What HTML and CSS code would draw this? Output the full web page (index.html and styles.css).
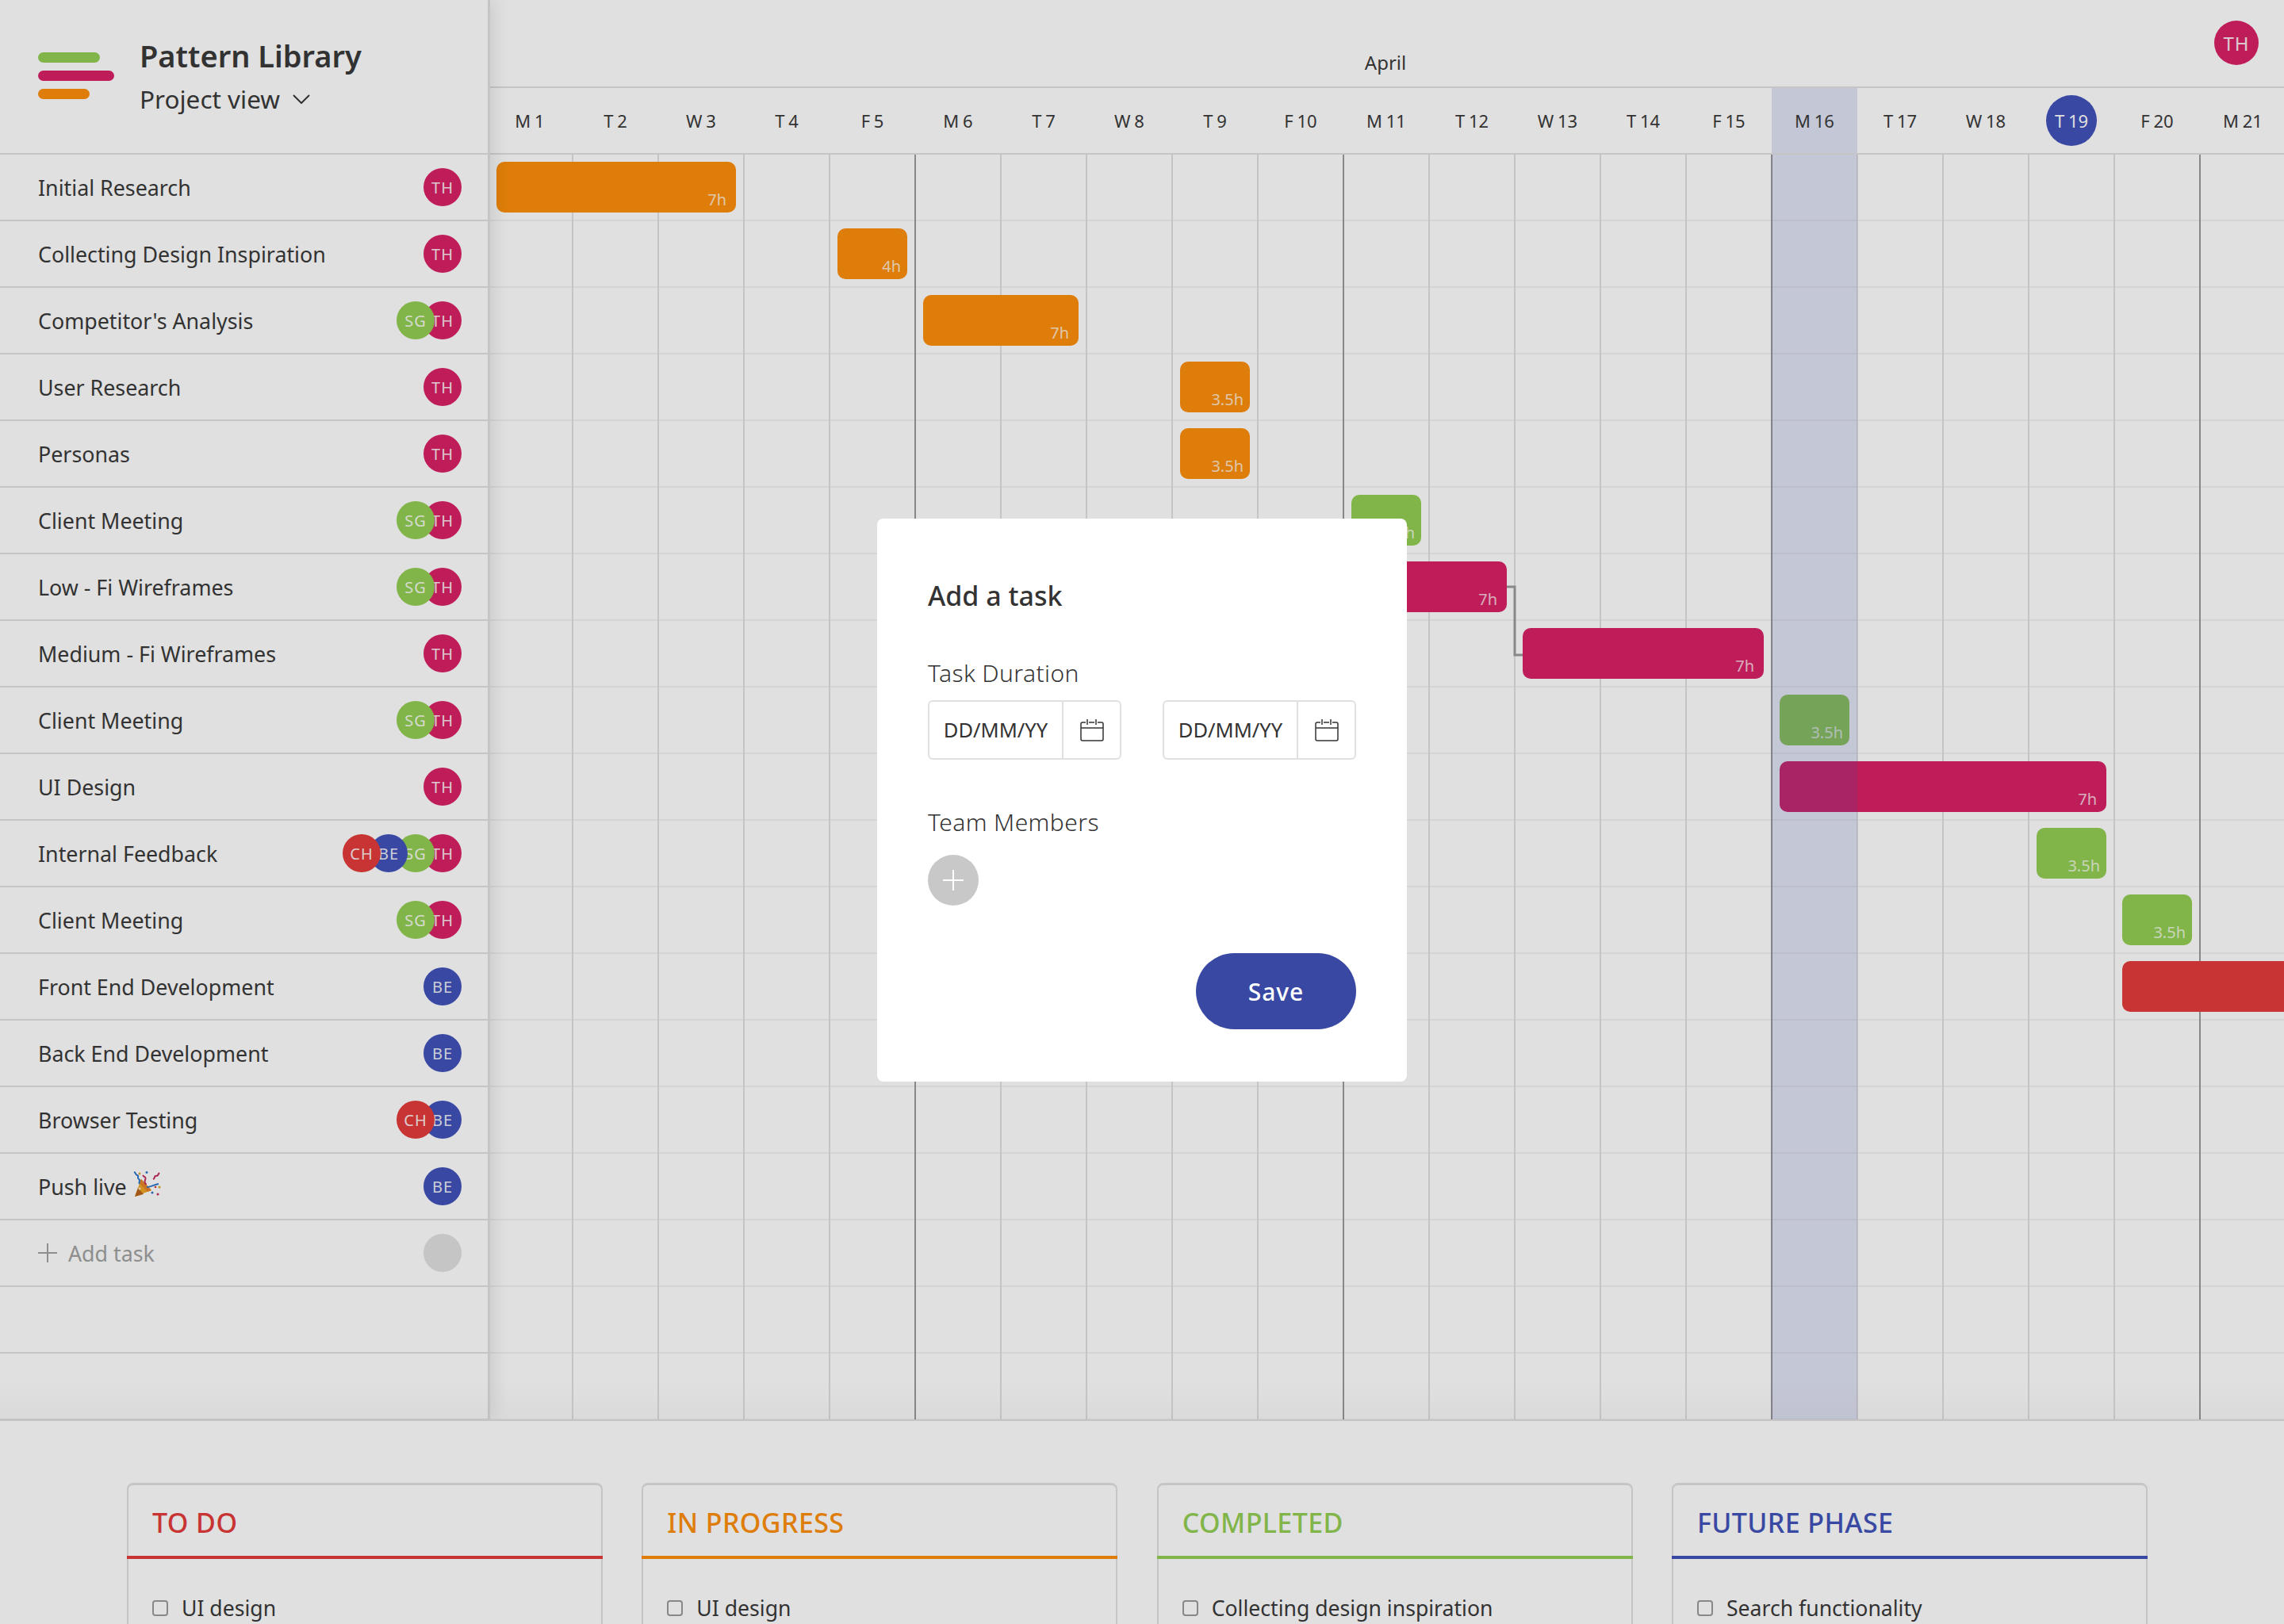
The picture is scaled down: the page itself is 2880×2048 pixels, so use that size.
FILE: index.html
```html
<!DOCTYPE html>
<html lang="en">
<head>
  <meta charset="UTF-8" />
  <title>Pattern Library - Project view</title>
  <link rel="stylesheet" href="styles.css">
</head>
<body>
  <div class="planner">
    <aside class="sidebar">
      <div class="brand">
        <div class="logo"><span class="logo-a"></span><span class="logo-b"></span><span class="logo-c"></span></div>
        <div>
          <h1>Pattern Library</h1>
          <div class="view">Project view
            <svg width="22" height="12" viewBox="0 0 22 12"><path d="M1 1l10 10L21 1" fill="none" stroke="#3a3a3a" stroke-width="2"/></svg>
          </div>
        </div>
      </div>
      <div class="task"><span>Initial Research</span><div class="people"><i class="av th">TH</i></div></div>
      <div class="task"><span>Collecting Design Inspiration</span><div class="people"><i class="av th">TH</i></div></div>
      <div class="task"><span>Competitor's Analysis</span><div class="people"><i class="av th">TH</i><i class="av sg">SG</i></div></div>
      <div class="task"><span>User Research</span><div class="people"><i class="av th">TH</i></div></div>
      <div class="task"><span>Personas</span><div class="people"><i class="av th">TH</i></div></div>
      <div class="task"><span>Client Meeting</span><div class="people"><i class="av th">TH</i><i class="av sg">SG</i></div></div>
      <div class="task"><span>Low - Fi Wireframes</span><div class="people"><i class="av th">TH</i><i class="av sg">SG</i></div></div>
      <div class="task"><span>Medium - Fi Wireframes</span><div class="people"><i class="av th">TH</i></div></div>
      <div class="task"><span>Client Meeting</span><div class="people"><i class="av th">TH</i><i class="av sg">SG</i></div></div>
      <div class="task"><span>UI Design</span><div class="people"><i class="av th">TH</i></div></div>
      <div class="task"><span>Internal Feedback</span><div class="people"><i class="av th">TH</i><i class="av sg">SG</i><i class="av be">BE</i><i class="av ch">CH</i></div></div>
      <div class="task"><span>Client Meeting</span><div class="people"><i class="av th">TH</i><i class="av sg">SG</i></div></div>
      <div class="task"><span>Front End Development</span><div class="people"><i class="av be">BE</i></div></div>
      <div class="task"><span>Back End Development</span><div class="people"><i class="av be">BE</i></div></div>
      <div class="task"><span>Browser Testing</span><div class="people"><i class="av be">BE</i><i class="av ch">CH</i></div></div>
      <div class="task"><span class="push">Push live
        <svg class="popper" width="38" height="33" viewBox="0 0 38 33">
          <path d="M10 10L2 32l21-8z" fill="#f0a526"/>
          <path d="M2 32l4-11 7 8z" fill="#b8651c"/>
          <path d="M10 10l13 14-5 2L8 15z" fill="#e5842a"/>
          <path d="M1 1c3 1 1 3 4 4s-1 3 2 5-1 4 1 6" stroke="#2f76c9" stroke-width="2" fill="none"/>
          <path d="M12 5c2 3 5 2 3 6s1 3 1 6" stroke="#c32f5f" stroke-width="2" fill="none"/>
          <path d="M25 10c3-1 1-3 3-4s2 1 3-1 1-2 2-3" stroke="#c32f5f" stroke-width="2" fill="none"/>
          <path d="M17 20c5 0 9-3 15-4" stroke="#2f76c9" stroke-width="2" fill="none"/>
          <circle cx="8" cy="3" r="1.500" fill="#e0a52c"/>
          <circle cx="17" cy="1.500" r="1.500" fill="#2f76c9"/>
          <circle cx="33" cy="20" r="1.500" fill="#e0a52c"/>
          <circle cx="28" cy="20" r="1.300" fill="#d8392f"/>
          <circle cx="24" cy="27" r="1.500" fill="#2f76c9"/>
          <circle cx="31" cy="29" r="1.500" fill="#c32f5f"/>
          <circle cx="8" cy="22" r="1.500" fill="#fbe6c2"/>
        </svg></span><div class="people"><i class="av be">BE</i></div></div>
      <div class="task add"><span class="add-label">
        <svg width="24" height="24" viewBox="0 0 24 24"><path d="M12 0v24M0 12h24" stroke="#a2a2a2" stroke-width="2"/></svg>
        Add task</span><div class="people"><i class="av empty"></i></div></div>
      <div class="task"></div>
      <div class="task"></div>
    </aside>

    <main class="timeline">
      <div class="month">
        <span class="month-name">April</span>
        <i class="av th big">TH</i>
      </div>
      <div class="days">
        <span>M 1</span><span>T 2</span><span>W 3</span><span>T 4</span><span>F 5</span>
        <span>M 6</span><span>T 7</span><span>W 8</span><span>T 9</span><span>F 10</span>
        <span>M 11</span><span>T 12</span><span>W 13</span><span>T 14</span><span>F 15</span>
        <span class="shaded">M 16</span><span>T 17</span><span>W 18</span><span><b class="today">T 19</b></span><span>F 20</span>
        <span>M 21</span>
      </div>
      <div class="chart">
        <div class="bar orange first" style="grid-row:1;grid-column:1/span 3">7h</div>
        <div class="bar orange short" style="grid-row:2;grid-column:5">4h</div>
        <div class="bar orange" style="grid-row:3;grid-column:6/span 2">7h</div>
        <div class="bar orange short" style="grid-row:4;grid-column:9">3.5h</div>
        <div class="bar orange short" style="grid-row:5;grid-column:9">3.5h</div>
        <div class="bar green short" style="grid-row:6;grid-column:11">3.5h</div>
        <div class="bar crimson" style="grid-row:7;grid-column:11/span 2">7h</div>
        <div class="bar crimson" style="grid-row:8;grid-column:13/span 3">7h</div>
        <div class="bar green short" style="grid-row:9;grid-column:16">3.5h</div>
        <div class="bar crimson" style="grid-row:10;grid-column:16/span 4">7h</div>
        <div class="bar green short" style="grid-row:11;grid-column:19">3.5h</div>
        <div class="bar green short" style="grid-row:12;grid-column:20">3.5h</div>
        <div class="bar red" style="grid-row:13;grid-column:20/span 3"></div>
        <div class="shade"></div>
        <svg class="link" width="20" height="90" viewBox="0 0 20 90"><path d="M0 2H10V88H20" fill="none" stroke="#9b9b9b" stroke-width="3"/></svg>
      </div>
    </main>
  </div>

  <section class="boards">
    <div class="board"><h2 class="todo">TO DO</h2><label class="item"><i class="check"></i>UI design</label></div>
    <div class="board"><h2 class="progress">IN PROGRESS</h2><label class="item"><i class="check"></i>UI design</label></div>
    <div class="board"><h2 class="done">COMPLETED</h2><label class="item"><i class="check"></i>Collecting design inspiration</label></div>
    <div class="board"><h2 class="future">FUTURE PHASE</h2><label class="item"><i class="check"></i>Search functionality</label></div>
  </section>

  <div class="overlay">
    <div class="modal">
      <h3>Add a task</h3>
      <div class="field-label">Task Duration</div>
      <div class="dates">
        <div class="date"><span>DD/MM/YY</span><div class="cal">
          <svg width="30" height="28" viewBox="0 0 30 28"><path d="M7 4H3a2 2 0 0 0-2 2v19a2 2 0 0 0 2 2h24a2 2 0 0 0 2-2V6a2 2 0 0 0-2-2h-5M11 4h7M1 11h28M9 0v7M20 0v7" fill="none" stroke="#333" stroke-width="1.500"/></svg>
        </div></div>
        <div class="date"><span>DD/MM/YY</span><div class="cal">
          <svg width="30" height="28" viewBox="0 0 30 28"><path d="M7 4H3a2 2 0 0 0-2 2v19a2 2 0 0 0 2 2h24a2 2 0 0 0 2-2V6a2 2 0 0 0-2-2h-5M11 4h7M1 11h28M9 0v7M20 0v7" fill="none" stroke="#333" stroke-width="1.500"/></svg>
        </div></div>
      </div>
      <div class="field-label team">Team Members</div>
      <button class="add-member">
        <svg width="26" height="26" viewBox="0 0 26 26"><path d="M13 0v26M0 13h26" stroke="#fff" stroke-width="2"/></svg>
      </button>
      <div class="modal-actions"><button class="save">Save</button></div>
    </div>
  </div>
</body>
</html>
```

FILE: styles.css
```css
:root {
  --crimson: #da2266;
  --orange: #fd8f0b;
  --green: #94cf54;
  --red: #e43c3b;
  --blue: #4153b9;
  --text: #3a3a3a;
  --line: #e1e1e1;
  --line-soft: #f3f3f3;
  --monday: #9b9b9b;
}

* {
  margin: 0;
  padding: 0;
  box-sizing: border-box;
}

html, body {
  height: 2048px;
  overflow: hidden;
  background: #fff;
  color: var(--text);
  font-family: "Noto Sans", sans-serif;
}

.planner {
  position: relative;
  display: flex;
  height: 1792px;
  overflow: hidden;
  border-bottom: 2px solid var(--line);
}

.planner::after {
  content: "";
  position: absolute;
  left: 0;
  right: 0;
  bottom: 0;
  z-index: 3;
  height: 50px;
  background: linear-gradient(to top, rgba(0, 0, 0, 0.025), transparent);
}

.sidebar {
  flex: none;
  width: 618px;
  border-right: 3px solid var(--line);
  background: #fff;
  box-shadow: 4px 0 22px rgba(0, 0, 0, 0.1);
  position: relative;
  z-index: 2;
}

.brand {
  display: flex;
  align-items: center;
  gap: 32px;
  height: 195px;
  padding: 0 0 2px 48px;
  border-bottom: 2px solid var(--line);
}

.logo {
  display: flex;
  flex-direction: column;
  gap: 10px;
}

.logo span {
  display: block;
  height: 13px;
  border-radius: 7px;
}

.logo-a { width: 78px; background: var(--green); }
.logo-b { width: 96px; background: var(--crimson); }
.logo-c { width: 65px; background: var(--orange); }

h1 {
  font-size: 38px;
  font-weight: 600;
  line-height: 52px;
}

.view {
  display: flex;
  align-items: center;
  gap: 16px;
  font-size: 31.5px;
  line-height: 44px;
  margin-top: 7px;
}

.task {
  display: flex;
  align-items: center;
  justify-content: space-between;
  height: 84px;
  padding: 0 33px 0 48px;
  border-bottom: 2px solid var(--line);
  font-size: 26.8px;
}

.push {
  display: flex;
  align-items: center;
  gap: 8px;
}

.popper { margin-top: -6px; }

.add-label {
  display: flex;
  align-items: center;
  gap: 14px;
  color: #a2a2a2;
}

.people {
  display: flex;
  flex-direction: row-reverse;
}

.av {
  display: flex;
  align-items: center;
  justify-content: center;
  width: 48px;
  height: 48px;
  border-radius: 50%;
  color: rgba(255, 255, 255, 0.9);
  font-size: 20px;
  font-style: normal;
  letter-spacing: 1px;
}

.people .av + .av { margin-right: -14px; }
.people .av:nth-child(2) { z-index: 1; }
.people .av:nth-child(3) { z-index: 2; }
.people .av:nth-child(4) { z-index: 3; }

.th { background: var(--crimson); }
.sg { background: var(--green); }
.be { background: var(--blue); }
.ch { background: var(--red); }
.empty { background: var(--line); }

.timeline {
  flex: 1;
  min-width: 0;
  margin-left: -4px;
  overflow: hidden;
}

.month {
  display: grid;
  grid-template-columns: 1fr auto 1fr;
  height: 111px;
  border-bottom: 2px solid var(--line);
}

.month-name {
  grid-column: 2;
  align-self: end;
  padding-bottom: 14px;
  font-size: 24px;
}

.big {
  grid-column: 3;
  justify-self: end;
  margin: 26px 32px 0 0;
  width: 56px;
  height: 56px;
  font-size: 24px;
}

.days {
  display: grid;
  grid-template-columns: repeat(21, 108px);
  height: 84px;
  border-bottom: 2px solid var(--line);
}

.days span {
  display: flex;
  align-items: center;
  justify-content: center;
  font-size: 22px;
  word-spacing: -1px;
}

.days .shaded { background: rgba(65, 83, 185, 0.16); }

.today {
  display: flex;
  align-items: center;
  justify-content: center;
  width: 64px;
  height: 64px;
  border-radius: 50%;
  background: var(--blue);
  color: #fff;
  font-weight: 400;
}

.chart {
  position: relative;
  display: grid;
  grid-template-columns: repeat(22, 108px);
  grid-template-rows: repeat(19, 84px);
  background-image:
    linear-gradient(90deg, var(--monday) 2px, transparent 2px),
    linear-gradient(90deg, var(--line) 2px, transparent 2px),
    linear-gradient(to top, var(--line-soft) 2px, transparent 2px);
  background-size: 540px 100%, 108px 100%, 100% 84px;
  background-position: -1px 0, -1px 0, 0 0;
}

.bar {
  display: flex;
  align-items: flex-end;
  justify-content: flex-end;
  height: 64px;
  margin: 9px 10px 11px;
  padding: 0 12px 3px 0;
  border-radius: 10px;
  color: rgba(255, 255, 255, 0.75);
  font-size: 20px;
}

.short { padding-right: 8px; }
.first { margin-left: 12px; }

.orange { background: var(--orange); }
.green { background: var(--green); }
.crimson { background: var(--crimson); }
.red { background: var(--red); }

.shade {
  grid-row: 1 / -1;
  grid-column: 16;
  background: rgba(65, 83, 185, 0.16);
}

.link {
  position: absolute;
  left: 1286px;
  top: 543px;
}

.boards {
  display: flex;
  justify-content: space-between;
  width: 2548px;
  margin: 78px 0 0 160px;
}

.board {
  width: 600px;
  height: 240px;
  border: 2px solid var(--line);
  border-top-width: 3px;
  border-radius: 8px;
}

.board h2 {
  height: 93px;
  margin: 0 -2px;
  padding: 22px 32px 0;
  font-size: 34px;
  font-weight: 500;
  line-height: 50px;
  letter-spacing: 0.4px;
  border-bottom: 4px solid;
}

.todo { color: var(--red); }
.progress { color: var(--orange); }
.done { color: var(--green); }
.future { color: var(--blue); }

.item {
  display: flex;
  align-items: center;
  gap: 17px;
  margin: 43px 0 0 30px;
  font-size: 26.6px;
  line-height: 38px;
}

.check {
  width: 20px;
  height: 20px;
  border: 2px solid var(--monday);
  border-radius: 4px;
}

.overlay {
  position: absolute;
  inset: 0;
  z-index: 5;
  display: flex;
  align-items: center;
  justify-content: center;
  padding-bottom: 30px;
  background: rgba(0, 0, 0, 0.12);
}

.modal {
  width: 668px;
  height: 710px;
  padding: 74px 64px 0;
  border-radius: 8px;
  background: #fff;
  color: #333;
}

h3 {
  font-size: 34px;
  font-weight: 500;
  line-height: 46px;
}

.field-label {
  margin-top: 54px;
  font-size: 30px;
  font-weight: 300;
  line-height: 42px;
  letter-spacing: 0.4px;
}

.field-label.team { margin-top: 58px; }

.dates {
  display: flex;
  justify-content: space-between;
  margin-top: 13px;
}

.date {
  display: flex;
  width: 244px;
  height: 75px;
  border: 2px solid #e0e0e0;
  border-radius: 6px;
}

.date span {
  width: 169px;
  border-right: 2px solid #e0e0e0;
  font-size: 25.5px;
  line-height: 71px;
  text-align: center;
}

.cal {
  flex: 1;
  display: flex;
  align-items: center;
  justify-content: center;
}

.add-member {
  display: flex;
  align-items: center;
  justify-content: center;
  width: 64px;
  height: 64px;
  margin-top: 20px;
  border: none;
  border-radius: 50%;
  background: #c8c8c8;
}

.modal-actions {
  display: flex;
  justify-content: flex-end;
  margin-top: 60px;
}

.save {
  width: 202px;
  height: 96px;
  border: none;
  border-radius: 48px;
  background: #3949a3;
  color: #fff;
  font-family: inherit;
  font-size: 30px;
  font-weight: 500;
  letter-spacing: 1px;
}
```
